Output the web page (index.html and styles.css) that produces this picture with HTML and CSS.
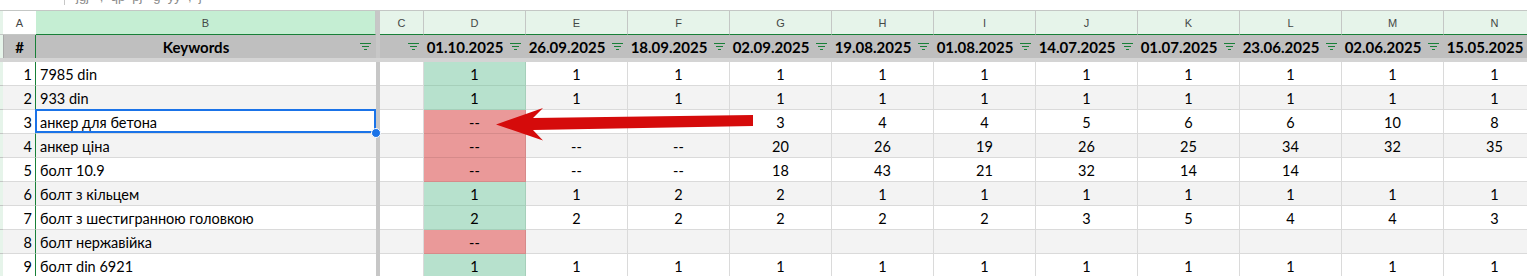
FILE: index.html
```html
<!DOCTYPE html>
<html>
<head>
<meta charset="utf-8">
<link rel="stylesheet" href="styles.css">
</head>
<body>
<div class="sheet">
  <div class="fbar"><span class="fbar-sep"></span><span class="fbar-text">jgj   ,  qp  pj   g  yy  ,  j</span></div>

  <div class="row letters">
    <div class="c strip"></div>
    <div class="c colA">A</div>
    <div class="c colB">B</div>
    <div class="c freeze"></div>
    <div class="c">C</div><div class="c">D</div><div class="c">E</div><div class="c">F</div><div class="c">G</div><div class="c">H</div><div class="c">I</div><div class="c">J</div><div class="c">K</div><div class="c">L</div><div class="c">M</div><div class="c">N</div>
  </div>

  <div class="row head">
    <div class="c strip"></div>
    <div class="c colA">#</div>
    <div class="c colB"><span class="t">Keywords</span><svg class="flt" width="11" height="7" viewBox="0 0 11 7"><rect x="0" y="0" width="11" height="1"/><rect x="2" y="3" width="7" height="1"/><rect x="4" y="6" width="3" height="1"/></svg></div>
    <div class="c freeze"></div>
    <div class="c"><span class="t"></span><svg class="flt" width="11" height="7" viewBox="0 0 11 7"><rect x="0" y="0" width="11" height="1"/><rect x="2" y="3" width="7" height="1"/><rect x="4" y="6" width="3" height="1"/></svg></div>
    <div class="c"><span class="t">01.10.2025</span><svg class="flt" width="11" height="7" viewBox="0 0 11 7"><rect x="0" y="0" width="11" height="1"/><rect x="2" y="3" width="7" height="1"/><rect x="4" y="6" width="3" height="1"/></svg></div>
    <div class="c"><span class="t">26.09.2025</span><svg class="flt" width="11" height="7" viewBox="0 0 11 7"><rect x="0" y="0" width="11" height="1"/><rect x="2" y="3" width="7" height="1"/><rect x="4" y="6" width="3" height="1"/></svg></div>
    <div class="c"><span class="t">18.09.2025</span><svg class="flt" width="11" height="7" viewBox="0 0 11 7"><rect x="0" y="0" width="11" height="1"/><rect x="2" y="3" width="7" height="1"/><rect x="4" y="6" width="3" height="1"/></svg></div>
    <div class="c"><span class="t">02.09.2025</span><svg class="flt" width="11" height="7" viewBox="0 0 11 7"><rect x="0" y="0" width="11" height="1"/><rect x="2" y="3" width="7" height="1"/><rect x="4" y="6" width="3" height="1"/></svg></div>
    <div class="c"><span class="t">19.08.2025</span><svg class="flt" width="11" height="7" viewBox="0 0 11 7"><rect x="0" y="0" width="11" height="1"/><rect x="2" y="3" width="7" height="1"/><rect x="4" y="6" width="3" height="1"/></svg></div>
    <div class="c"><span class="t">01.08.2025</span><svg class="flt" width="11" height="7" viewBox="0 0 11 7"><rect x="0" y="0" width="11" height="1"/><rect x="2" y="3" width="7" height="1"/><rect x="4" y="6" width="3" height="1"/></svg></div>
    <div class="c"><span class="t">14.07.2025</span><svg class="flt" width="11" height="7" viewBox="0 0 11 7"><rect x="0" y="0" width="11" height="1"/><rect x="2" y="3" width="7" height="1"/><rect x="4" y="6" width="3" height="1"/></svg></div>
    <div class="c"><span class="t">01.07.2025</span><svg class="flt" width="11" height="7" viewBox="0 0 11 7"><rect x="0" y="0" width="11" height="1"/><rect x="2" y="3" width="7" height="1"/><rect x="4" y="6" width="3" height="1"/></svg></div>
    <div class="c"><span class="t">23.06.2025</span><svg class="flt" width="11" height="7" viewBox="0 0 11 7"><rect x="0" y="0" width="11" height="1"/><rect x="2" y="3" width="7" height="1"/><rect x="4" y="6" width="3" height="1"/></svg></div>
    <div class="c"><span class="t">02.06.2025</span><svg class="flt" width="11" height="7" viewBox="0 0 11 7"><rect x="0" y="0" width="11" height="1"/><rect x="2" y="3" width="7" height="1"/><rect x="4" y="6" width="3" height="1"/></svg></div>
    <div class="c"><span class="t">15.05.2025</span><svg class="flt" width="11" height="7" viewBox="0 0 11 7"><rect x="0" y="0" width="11" height="1"/><rect x="2" y="3" width="7" height="1"/><rect x="4" y="6" width="3" height="1"/></svg></div>
  </div>

  <div class="hband"></div>

  <div class="row data">
    <div class="c strip"></div><div class="c colA">1</div><div class="c colB">7985 din</div><div class="c freeze"></div><div class="c"></div>
    <div class="c g">1</div><div class="c">1</div><div class="c">1</div><div class="c">1</div><div class="c">1</div><div class="c">1</div><div class="c">1</div><div class="c">1</div><div class="c">1</div><div class="c">1</div><div class="c">1</div>
  </div>
  <div class="row data alt">
    <div class="c strip"></div><div class="c colA">2</div><div class="c colB">933 din</div><div class="c freeze"></div><div class="c"></div>
    <div class="c g">1</div><div class="c">1</div><div class="c">1</div><div class="c">1</div><div class="c">1</div><div class="c">1</div><div class="c">1</div><div class="c">1</div><div class="c">1</div><div class="c">1</div><div class="c">1</div>
  </div>
  <div class="row data">
    <div class="c strip"></div><div class="c colA">3</div><div class="c colB sel">анкер для бетона<span class="selbox"></span><span class="handle"></span></div><div class="c freeze"></div><div class="c"></div>
    <div class="c r">--</div><div class="c"></div><div class="c"></div><div class="c">3</div><div class="c">4</div><div class="c">4</div><div class="c">5</div><div class="c">6</div><div class="c">6</div><div class="c">10</div><div class="c">8</div>
  </div>
  <div class="row data alt">
    <div class="c strip"></div><div class="c colA">4</div><div class="c colB">анкер ціна</div><div class="c freeze"></div><div class="c"></div>
    <div class="c r">--</div><div class="c">--</div><div class="c">--</div><div class="c">20</div><div class="c">26</div><div class="c">19</div><div class="c">26</div><div class="c">25</div><div class="c">34</div><div class="c">32</div><div class="c">35</div>
  </div>
  <div class="row data">
    <div class="c strip"></div><div class="c colA">5</div><div class="c colB">болт 10.9</div><div class="c freeze"></div><div class="c"></div>
    <div class="c r">--</div><div class="c">--</div><div class="c">--</div><div class="c">18</div><div class="c">43</div><div class="c">21</div><div class="c">32</div><div class="c">14</div><div class="c">14</div><div class="c"></div><div class="c"></div>
  </div>
  <div class="row data alt">
    <div class="c strip"></div><div class="c colA">6</div><div class="c colB">болт з кільцем</div><div class="c freeze"></div><div class="c"></div>
    <div class="c g">1</div><div class="c">1</div><div class="c">2</div><div class="c">2</div><div class="c">1</div><div class="c">1</div><div class="c">1</div><div class="c">1</div><div class="c">1</div><div class="c">1</div><div class="c">1</div>
  </div>
  <div class="row data">
    <div class="c strip"></div><div class="c colA">7</div><div class="c colB">болт з шестигранною головкою</div><div class="c freeze"></div><div class="c"></div>
    <div class="c g">2</div><div class="c">2</div><div class="c">2</div><div class="c">2</div><div class="c">2</div><div class="c">2</div><div class="c">3</div><div class="c">5</div><div class="c">4</div><div class="c">4</div><div class="c">3</div>
  </div>
  <div class="row data alt">
    <div class="c strip"></div><div class="c colA">8</div><div class="c colB">болт нержавійка</div><div class="c freeze"></div><div class="c"></div>
    <div class="c r">--</div><div class="c"></div><div class="c"></div><div class="c"></div><div class="c"></div><div class="c"></div><div class="c"></div><div class="c"></div><div class="c"></div><div class="c"></div><div class="c"></div>
  </div>
  <div class="row data">
    <div class="c strip"></div><div class="c colA">9</div><div class="c colB">болт din 6921</div><div class="c freeze"></div><div class="c"></div>
    <div class="c g">1</div><div class="c">1</div><div class="c">1</div><div class="c">1</div><div class="c">1</div><div class="c">1</div><div class="c">1</div><div class="c">1</div><div class="c">1</div><div class="c">1</div><div class="c">1</div>
  </div>

  <svg class="arrow" width="1527" height="276" viewBox="0 0 1527 276">
    <polygon points="496,124.5 543,108 533,118 753,115 753,126 533,130 543,140.5"/>
  </svg>
</div>
</body>
</html>
```

FILE: styles.css
```css
body {
  margin: 0;
  overflow: hidden;
  background: #ffffff;
  font-family: "Lato", "Open Sans", sans-serif;
}

.sheet {
  position: relative;
  width: 1527px;
  height: 276px;
  overflow: hidden;
}

.fbar {
  height: 10px;
  border-bottom: 1px solid #c4c7c5;
  display: flex;
  align-items: flex-start;
  overflow: hidden;
}

.fbar-sep {
  flex: none;
  width: 1px;
  height: 5px;
  background: #c7c7c7;
  margin-left: 64px;
}

.fbar-text {
  margin-left: 11px;
  margin-top: -10px;
  font: 13px/13px "Liberation Sans", sans-serif;
  color: #8a8a8a;
  white-space: pre;
}

.row {
  display: grid;
  grid-template-columns: 3px 33px 340px 4px 44px repeat(11, 102px);
}

.c {
  box-sizing: border-box;
  overflow: hidden;
  white-space: nowrap;
  display: flex;
  align-items: center;
  justify-content: center;
}

.freeze {
  background: #c7c7c7 !important;
  border: none !important;
}

/* column letters row */
.letters .c {
  height: 24px;
  font: 11px "Liberation Sans", Arial, sans-serif;
  color: #444746;
  background: #e6f4ea;
  border-right: 1px solid #c4c7c5;
  border-bottom: 1px solid #188038;
}

.letters .strip {
  border-right: none;
  border-bottom-color: #c4c7c5;
}

.letters .colA {
  background: #ffffff;
  border-bottom-color: #c4c7c5;
  border-right: none;
}

.letters .colB {
  background: #c5eed3;
}

/* header row */
.head .c {
  height: 23px;
  background: #bfbfbf;
  font-weight: 700;
  font-size: 15px;
  color: #000;
}

.head .strip {
  background: #e6f4ea;
}

.head .colA {
  border-left: 1px solid #a9a9a9;
  border-right: 1px solid #188038;
}

.head .t {
  flex: 1;
  text-align: center;
}

.head .flt {
  flex: none;
  margin: 0 5px 0 4px;
  fill: #188038;
}

.hband {
  height: 4px;
  background: #d4d4d4;
}

/* data rows */
.data .c {
  height: 24px;
  padding-top: 2px;
  font-size: 14.5px;
  color: #000;
  background: #ffffff;
  border-right: 1px solid #dadada;
  border-bottom: 1px solid #dadada;
}

.data.alt .c {
  background: #f3f3f3;
}

.data .strip {
  background: #e6f4ea !important;
  border-right: none;
  border-bottom-color: #c4c7c5;
}

.data .colA {
  justify-content: flex-end;
  padding-right: 3px;
  border-right: 1px solid #188038;
}

.data .colB {
  justify-content: flex-start;
  padding-left: 4px;
  border-right: none;
}

.data .g {
  background: #b7e1cd !important;
  border-color: #a6cfba;
}

.data .r {
  background: #ea9999 !important;
  border-color: #d68a8a;
}

.sel {
  position: relative;
  overflow: visible;
  z-index: 2;
}

.selbox {
  position: absolute;
  top: -1px;
  left: -1px;
  right: 0;
  bottom: 0;
  border: 2px solid #1a73e8;
}

.handle {
  position: absolute;
  right: -5px;
  bottom: -5px;
  width: 8px;
  height: 8px;
  border-radius: 50%;
  background: #1a73e8;
  border: 1px solid #ffffff;
}

.arrow {
  position: absolute;
  left: 0;
  top: 0;
  pointer-events: none;
  z-index: 5;
  fill: #d50b0b;
}
```
